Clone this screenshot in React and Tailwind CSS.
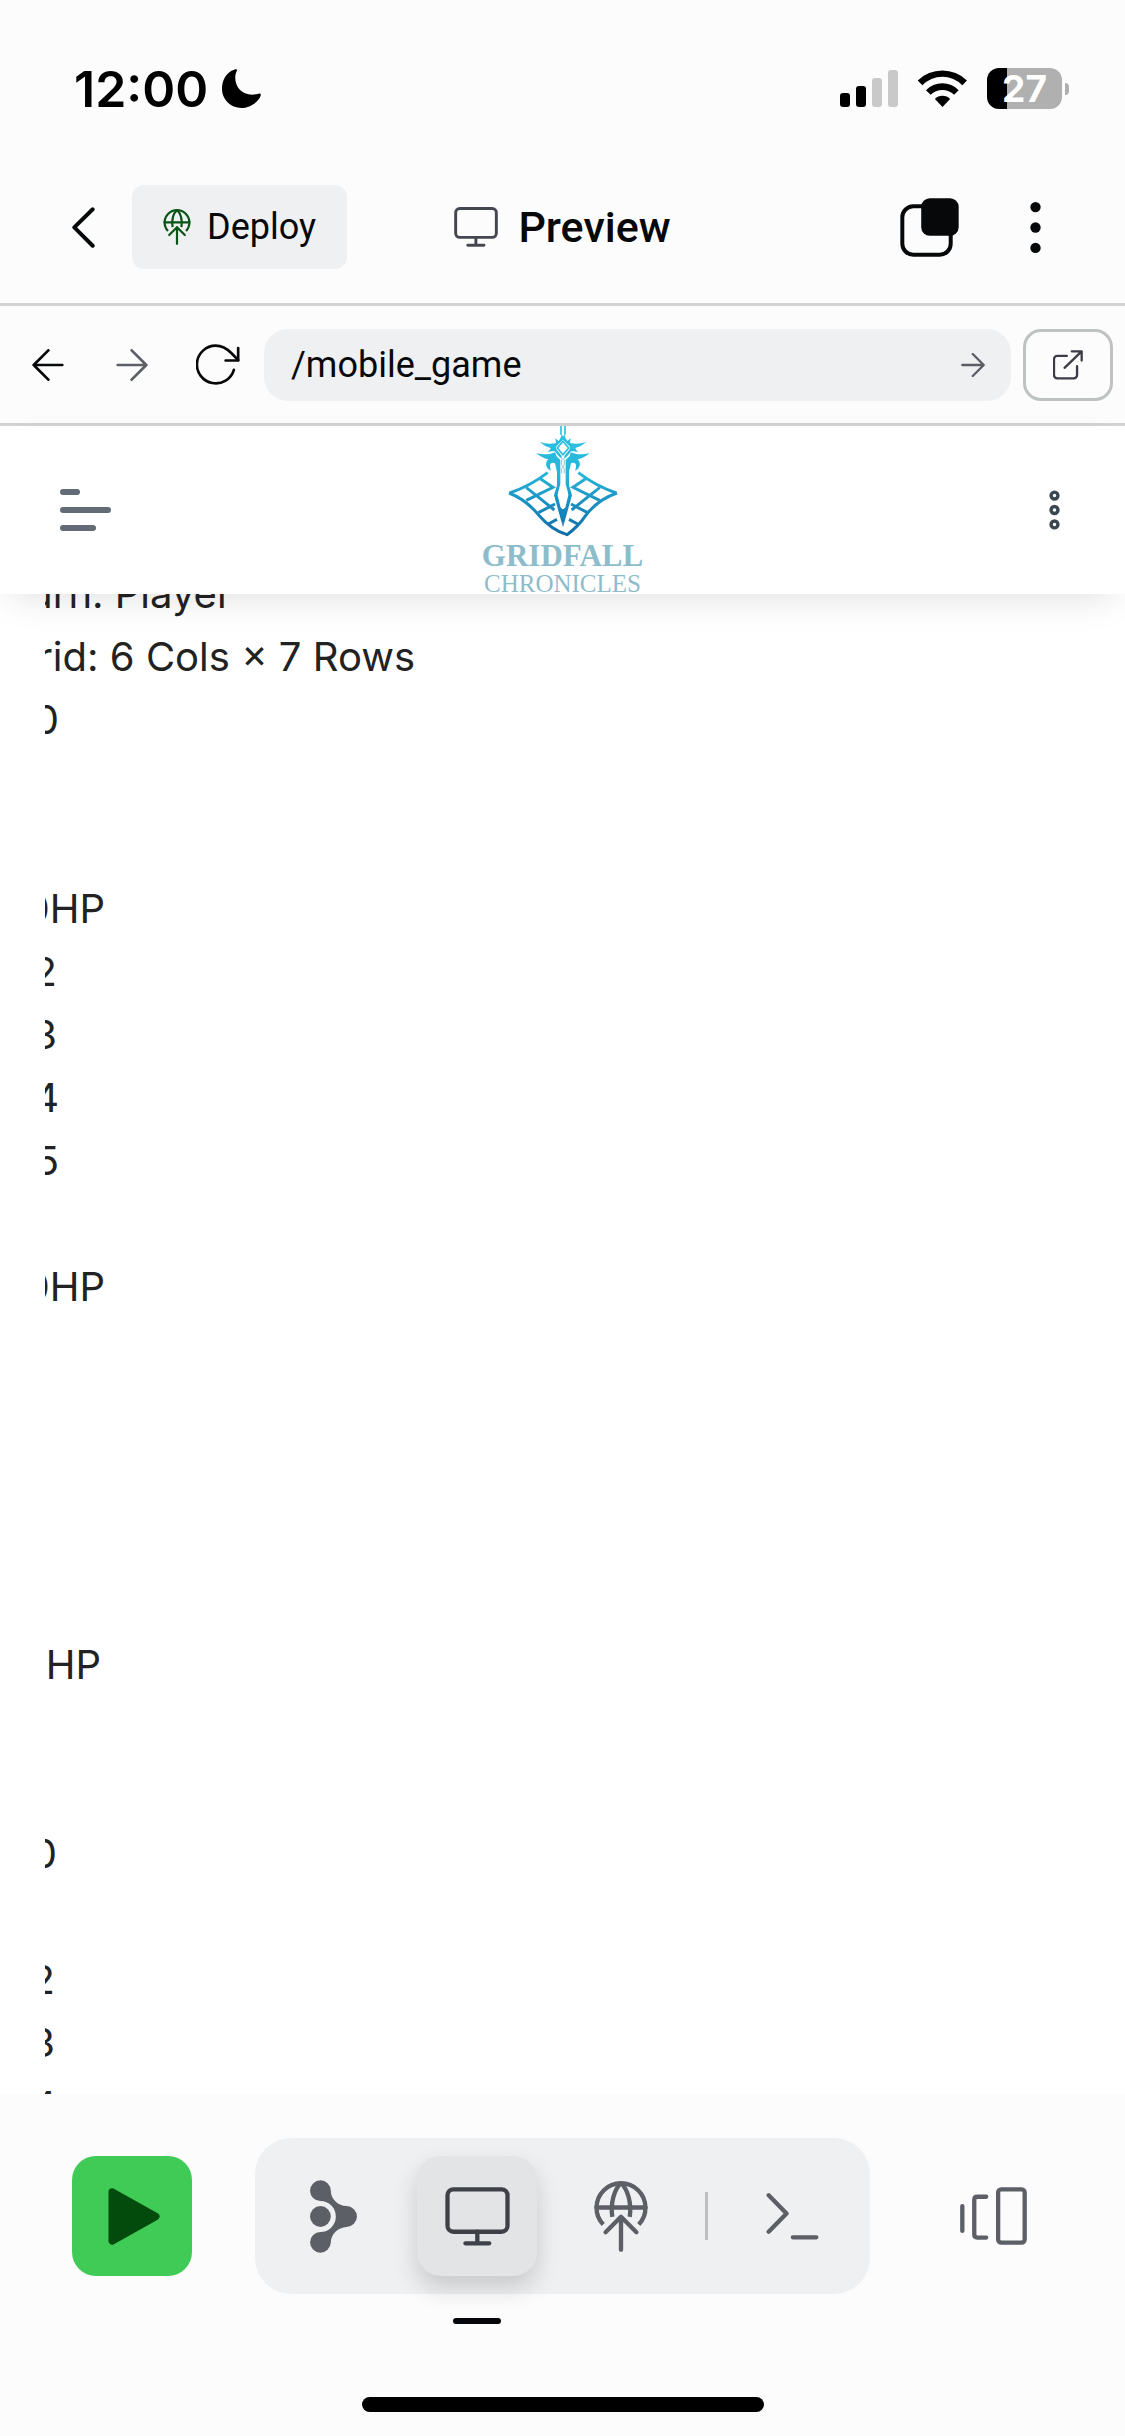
import React from "react";

const round = { fill: "none", stroke: "currentColor", strokeLinecap: "round", strokeLinejoin: "round" };

function DeployIcon({ className }) {
  return (
    <svg viewBox="0 0 160 212" className={className} {...round} strokeWidth="13" aria-hidden="true">
      <path d="M27 130A73 73 0 1 1 133 130" strokeLinecap="butt" />
      <path d="M7 79H153" />
      <path d="M80 6C60 25 48 65 54 107M80 6C100 25 112 65 106 107" strokeLinecap="butt" />
      <path d="M34 153L80 107L126 153M80 107V205" />
    </svg>
  );
}

function MonitorIcon({ className }) {
  return (
    <svg viewBox="0 0 195 178" className={className} {...round} strokeWidth="13" aria-hidden="true">
      <rect x="7" y="7" width="181" height="128" rx="18" />
      <path d="M97 135V170M61 170H133" />
    </svg>
  );
}

function ArrowIcon({ className, strokeWidth }) {
  return (
    <svg viewBox="0 0 94 94" className={className} {...round} strokeWidth={strokeWidth} aria-hidden="true">
      <path d="M5 47H89M46 4L89 47L46 90" />
    </svg>
  );
}

function StatusBar() {
  return (
    <div className="flex h-[151px] shrink-0 items-center justify-between pt-[26px] pr-14 pl-[74px] text-black">
      <div className="flex items-center gap-[14px]">
        <span className="font-['Inter',sans-serif] text-[50px] leading-none font-semibold">12:00</span>
        <svg viewBox="666 89 118 118" className="size-[39px]" fill="currentColor" aria-label="Focus on">
          <path d="M703 91C680 98 666 122 666 148A58 58 0 0 0 724 207C752 207 776 188 783 170C784 164 782 162 776 164C735 175 706 150 706 115C706 105 709 98 711 94C712 89 708 89 703 91Z" />
        </svg>
      </div>
      <div className="flex items-center">
        <svg viewBox="0 0 58 37" className="mr-[19px] h-[37px] w-[58px]" aria-label="Signal">
          <rect x="0" y="23" width="10" height="14" rx="3" />
          <rect x="16" y="16" width="10" height="21" rx="3" />
          <rect x="32" y="8" width="10" height="29" rx="3" fill="#c9c9c9" />
          <rect x="48" y="0" width="10" height="37" rx="3" fill="#c9c9c9" />
        </svg>
        <svg viewBox="412 90 152 112" className="mr-[19px] h-[37px] w-[51px]" aria-label="Wi-Fi">
          <path d="M413 122A106 106 0 0 1 562 122L548 136A84 84 0 0 0 427 136Z" />
          <path d="M438 151A69 69 0 0 1 537 151L523 165A50 50 0 0 0 452 165Z" />
          <path d="M465 178A32 32 0 0 1 511 178L488 202Z" />
        </svg>
        <div className="flex h-[41px] w-[75px] items-center justify-center rounded-xl bg-linear-to-r from-black from-27% to-[#b0b0b0] to-27% font-['Inter',sans-serif] text-[37px] leading-none font-bold text-white">
          27
        </div>
        <div className="ml-[3px] h-3 w-1 rounded-r-full bg-[#b0b0b0]" />
      </div>
    </div>
  );
}

function TopNav() {
  return (
    <nav className="grid h-[152px] shrink-0 grid-cols-[1fr_auto_1fr] items-center px-[72px]">
      <div className="flex items-center gap-[37px]">
        <button aria-label="Back">
          <svg viewBox="218 500 70 123" className="h-[41px] w-[23px]" {...round} strokeWidth="12">
            <path d="M281 506L225 561L281 617" />
          </svg>
        </button>
        <button className="flex h-[84px] items-center gap-4 rounded-xl bg-[#eff0f2] pr-[31px] pl-[31px] text-[36px]">
          <DeployIcon className="h-9 w-7 text-[#0b5417]" />
          Deploy
        </button>
      </div>
      <div className="flex items-center gap-5">
        <MonitorIcon className="h-10 w-11 text-[#44474f]" />
        <h1 className="text-[43px] font-medium">Preview</h1>
      </div>
      <div className="flex items-center justify-end gap-[71px]">
        <button aria-label="Tabs">
          <svg viewBox="359 470 178 178" className="size-[59px]">
            <rect x="366" y="495" width="146" height="146" rx="33" fill="none" stroke="currentColor" strokeWidth="12" />
            <rect x="423" y="471" width="113" height="113" rx="26" fill="currentColor" />
          </svg>
        </button>
        <button aria-label="More" className="mr-3">
          <svg viewBox="748 480 34 160" className="h-[53px] w-[11px]" fill="currentColor">
            <circle cx="765" cy="497" r="16" />
            <circle cx="765" cy="560" r="16" />
            <circle cx="765" cy="623" r="16" />
          </svg>
        </button>
      </div>
    </nav>
  );
}

function AddressBar() {
  return (
    <div className="flex h-[123px] shrink-0 items-center border-y-[3px] border-[#d2d3d4] pr-3 pl-8">
      <button aria-label="Go back">
        <ArrowIcon className="size-8 rotate-180" strokeWidth="8" />
      </button>
      <button aria-label="Go forward" className="ml-[52px] text-[#5d5f68]">
        <ArrowIcon className="size-8" strokeWidth="8" />
      </button>
      <button aria-label="Reload" className="ml-12">
        <svg viewBox="588 148 132 124" className="h-[41px] w-11" {...round} strokeWidth="8">
          <path d="M702 226A57 57 0 1 1 647 153C668 153 680 161 695 176L715 197" />
          <path d="M715 160V198H677" />
        </svg>
      </button>
      <form className="ml-6 flex h-[72px] min-w-0 flex-1 items-center rounded-3xl bg-[#eff0f2] pr-[26px] pl-[27px]">
        <input
          aria-label="Path"
          defaultValue="/mobile_game"
          className="min-w-0 flex-1 bg-transparent text-[36px] outline-none"
        />
        <button type="button" aria-label="Open path" className="text-[#5b5c66]">
          <ArrowIcon className="size-6" strokeWidth="9" />
        </button>
      </form>
      <button
        aria-label="Open in new tab"
        className="ml-3 flex h-[72px] w-[90px] items-center justify-center rounded-[18px] border-[3px] border-[#bfc2c3] text-[#3b3c47]"
      >
        <svg viewBox="459 165 91 91" className="size-[30px]" {...round} strokeWidth="7">
          <path d="M501 183H472A10 10 0 0 0 462 193V241A10 10 0 0 0 472 251H522A10 10 0 0 0 532 241V214" />
          <path d="M494 219L545 170M516 169H546V197" />
        </svg>
      </button>
    </div>
  );
}

const swordHalf = "M238 96Q264 105 287 99L285 85L295 93Q302 84 304 72L308 80V89Q300 97 289 108Q284 113 289 119L304 138V146Q292 138 284 124Q272 122 262 127Q269 120 271 114Q254 110 238 96Z";
const wingHalf = "M228 130Q250 134 268 132L285 127L288 138L300 150V222L294 244L292 255L304 306L308 352L281 256L290 226V186L284 160Q276 156 270 162Q267 170 272 182Q258 176 257 162Q257 153 264 148Q244 144 228 130Z";
const gridHalf = "M148 249Q208 229 262 188M198 233Q235 262 282 300M240 206L278 232L198 271M284 282L234 308M290 328L264 342";

function Logo() {
  return (
    <div className="flex w-44 flex-col items-center text-[#8dbccb]" aria-label="Gridfall Chronicles">
      <svg viewBox="140 48 336 336" className="size-28 shrink-0" aria-hidden="true">
        <defs>
          <linearGradient id="steel" gradientUnits="userSpaceOnUse" x1="308" y1="48" x2="308" y2="380">
            <stop offset="0" stopColor="#2cc4e2" />
            <stop offset="0.45" stopColor="#25b4da" />
            <stop offset="0.7" stopColor="#1a8fc2" />
            <stop offset="1" stopColor="#0f6ba6" />
          </linearGradient>
        </defs>
        <g fill="none" stroke="url(#steel)" strokeWidth="9">
          <path d={gridHalf} />
          <path d={gridHalf} transform="matrix(-1 0 0 1 616 0)" />
          <path d="M146 249Q196 268 234 314Q274 360 320 374Q352 352 378 314Q414 268 470 249" />
          <path d="M302 48V74M314 48V74" strokeWidth="5" />
          <path d="M308 94L325 114L308 134L291 114Z" strokeWidth="5" />
        </g>
        <g fill="url(#steel)">
          <path d={swordHalf} />
          <path d={swordHalf} transform="matrix(-1 0 0 1 616 0)" />
          <path d={wingHalf} />
          <path d={wingHalf} transform="matrix(-1 0 0 1 616 0)" />
          <path d="M308 350L297 290L308 298L319 290Z" />
        </g>
        <path d="M304 150L308 145L312 150V164L308 170L304 164ZM304 190V176L308 170L312 176V190" fill="none" stroke="#8fc6d4" strokeWidth="3" />
      </svg>
      <span className="font-['Liberation_Serif',serif] text-[31px] leading-9 font-bold">GRIDFALL</span>
      <span className="font-['Liberation_Serif',serif] text-[25px] leading-5">CHRONICLES</span>
    </div>
  );
}

function SiteHeader() {
  return (
    <header className="relative z-10 flex h-[168px] shrink-0 items-center justify-between bg-white px-[60px] shadow-[0_12px_36px_-12px_rgba(0,0,0,0.15)]">
      <div className="flex flex-1">
        <button aria-label="Menu" className="flex flex-col gap-3">
          <span className="h-[6px] w-5 rounded-full bg-[#636c76]" />
          <span className="h-[6px] w-[51px] rounded-full bg-[#636c76]" />
          <span className="h-[6px] w-9 rounded-full bg-[#636c76]" />
        </button>
      </div>
      <Logo />
      <div className="flex flex-1 justify-end">
        <button aria-label="Options" className="mr-[5px]">
          <svg viewBox="446 585 32 116" className="h-10 w-[11px] text-[#3a4750]" fill="none" stroke="currentColor" strokeWidth="10">
            <circle cx="462" cy="601" r="10" />
            <circle cx="462" cy="643" r="10" />
            <circle cx="462" cy="685" r="10" />
          </svg>
        </button>
      </div>
    </header>
  );
}

const lines = [
  ["Turn: Player", "w-[187px]"],
  ["Grid: 6 Cols × 7 Rows", "w-[370px]"],
  ["0", "w-[14px]"],
  ["", ""],
  ["", ""],
  ["0HP", "w-[60px]"],
  ["2", "w-[12px]"],
  ["3", "w-[12px]"],
  ["4", "w-[14px]"],
  ["5", "w-[14px]"],
  ["", ""],
  ["0HP", "w-[60px]"],
  ["", ""],
  ["", ""],
  ["", ""],
  ["", ""],
  ["", ""],
  ["HP", "w-[56px]"],
  ["", ""],
  ["", ""],
  ["0", "w-[12px]"],
  ["", ""],
  ["2", "w-[10px]"],
  ["3", "w-[10px]"],
  ["4", "w-[12px]"],
];

function GameLog() {
  return (
    <main className="min-h-0 flex-1 overflow-hidden bg-white pl-[45px]">
      <div className="h-full overflow-hidden">
        <div className="-mt-8 font-['Inter',sans-serif] text-[40px] leading-[63px] text-[#222]">
          {lines.map(([text, width], i) => (
            <p key={i} className={"flex h-[63px] justify-end whitespace-nowrap " + width}>
              {text}
            </p>
          ))}
        </div>
      </div>
    </main>
  );
}

function Dock() {
  return (
    <footer className="shrink-0 bg-[#fcfcfc] pt-11 pb-6">
      <div className="flex items-center justify-between px-[72px]">
        <button aria-label="Run" className="flex size-[120px] items-center justify-center rounded-3xl bg-[#3fcb55] pl-1">
          <svg viewBox="205 322 156 172" className="h-[57px] w-[52px]" fill="#024b0c" stroke="#024b0c" strokeWidth="22" strokeLinejoin="round">
            <path d="M217 334L349 408L217 482Z" />
          </svg>
        </button>
        <div className="flex h-[156px] items-center gap-6 rounded-[36px] bg-[#eff0f2] px-[18px] text-[#5d5f67]">
          <button aria-label="Agent" className="flex size-[120px] items-center justify-center">
            <svg viewBox="809 299 140 218" className="h-[73px] w-[47px]" fill="currentColor">
              <circle cx="840" cy="408" r="31" />
              <path d="M871 331C871 357 893 376 918 377A31 31 0 0 1 918 439C893 440 871 460 871 486A31 31 0 1 1 840 454A46 46 0 0 0 840 362A31 31 0 1 1 871 331Z" />
            </svg>
          </button>
          <button
            aria-label="Preview"
            aria-current="page"
            className="relative flex size-[120px] items-center justify-center rounded-3xl bg-[#e3e4e6] text-[#3f4148] shadow-[0_12px_24px_rgba(0,0,0,0.16)]"
          >
            <MonitorIcon className="h-[59px] w-[65px]" />
            <span className="absolute top-[162px] h-[6px] w-12 rounded-full bg-[#05070a]" />
          </button>
          <button aria-label="Deployments" className="flex size-[120px] items-center justify-center">
            <DeployIcon className="h-[71px] w-[54px]" />
          </button>
          <span className="h-12 w-[3px] bg-[#bfc0c2]" />
          <button aria-label="Shell" className="flex size-[120px] items-center justify-center">
            <svg viewBox="677 337 158 142" className="h-[47px] w-[53px]" {...round} strokeWidth="13">
              <path d="M684 344L738 399L684 454M757 471H828" />
            </svg>
          </button>
        </div>
        <button aria-label="Switch panes" className="flex size-[120px] items-center justify-center text-[#5d5f67]">
          <svg viewBox="1259 321 202 174" className="h-[58px] w-[67px]" {...round} strokeWidth="13">
            <path d="M1266 378V453M1338 350H1311Q1302 350 1302 359V464Q1302 473 1311 473H1338" />
            <rect x="1374" y="328" width="80" height="160" rx="9" />
          </svg>
        </button>
      </div>
      <div className="mx-auto mt-[103px] h-[15px] w-[402px] rounded-full bg-black" />
    </footer>
  );
}

export default function App() {
  return (
    <div className="flex h-screen flex-col overflow-hidden bg-[#fcfcfc] font-['Roboto',sans-serif] text-[#07080a]">
      <StatusBar />
      <TopNav />
      <AddressBar />
      <SiteHeader />
      <GameLog />
      <Dock />
    </div>
  );
}
